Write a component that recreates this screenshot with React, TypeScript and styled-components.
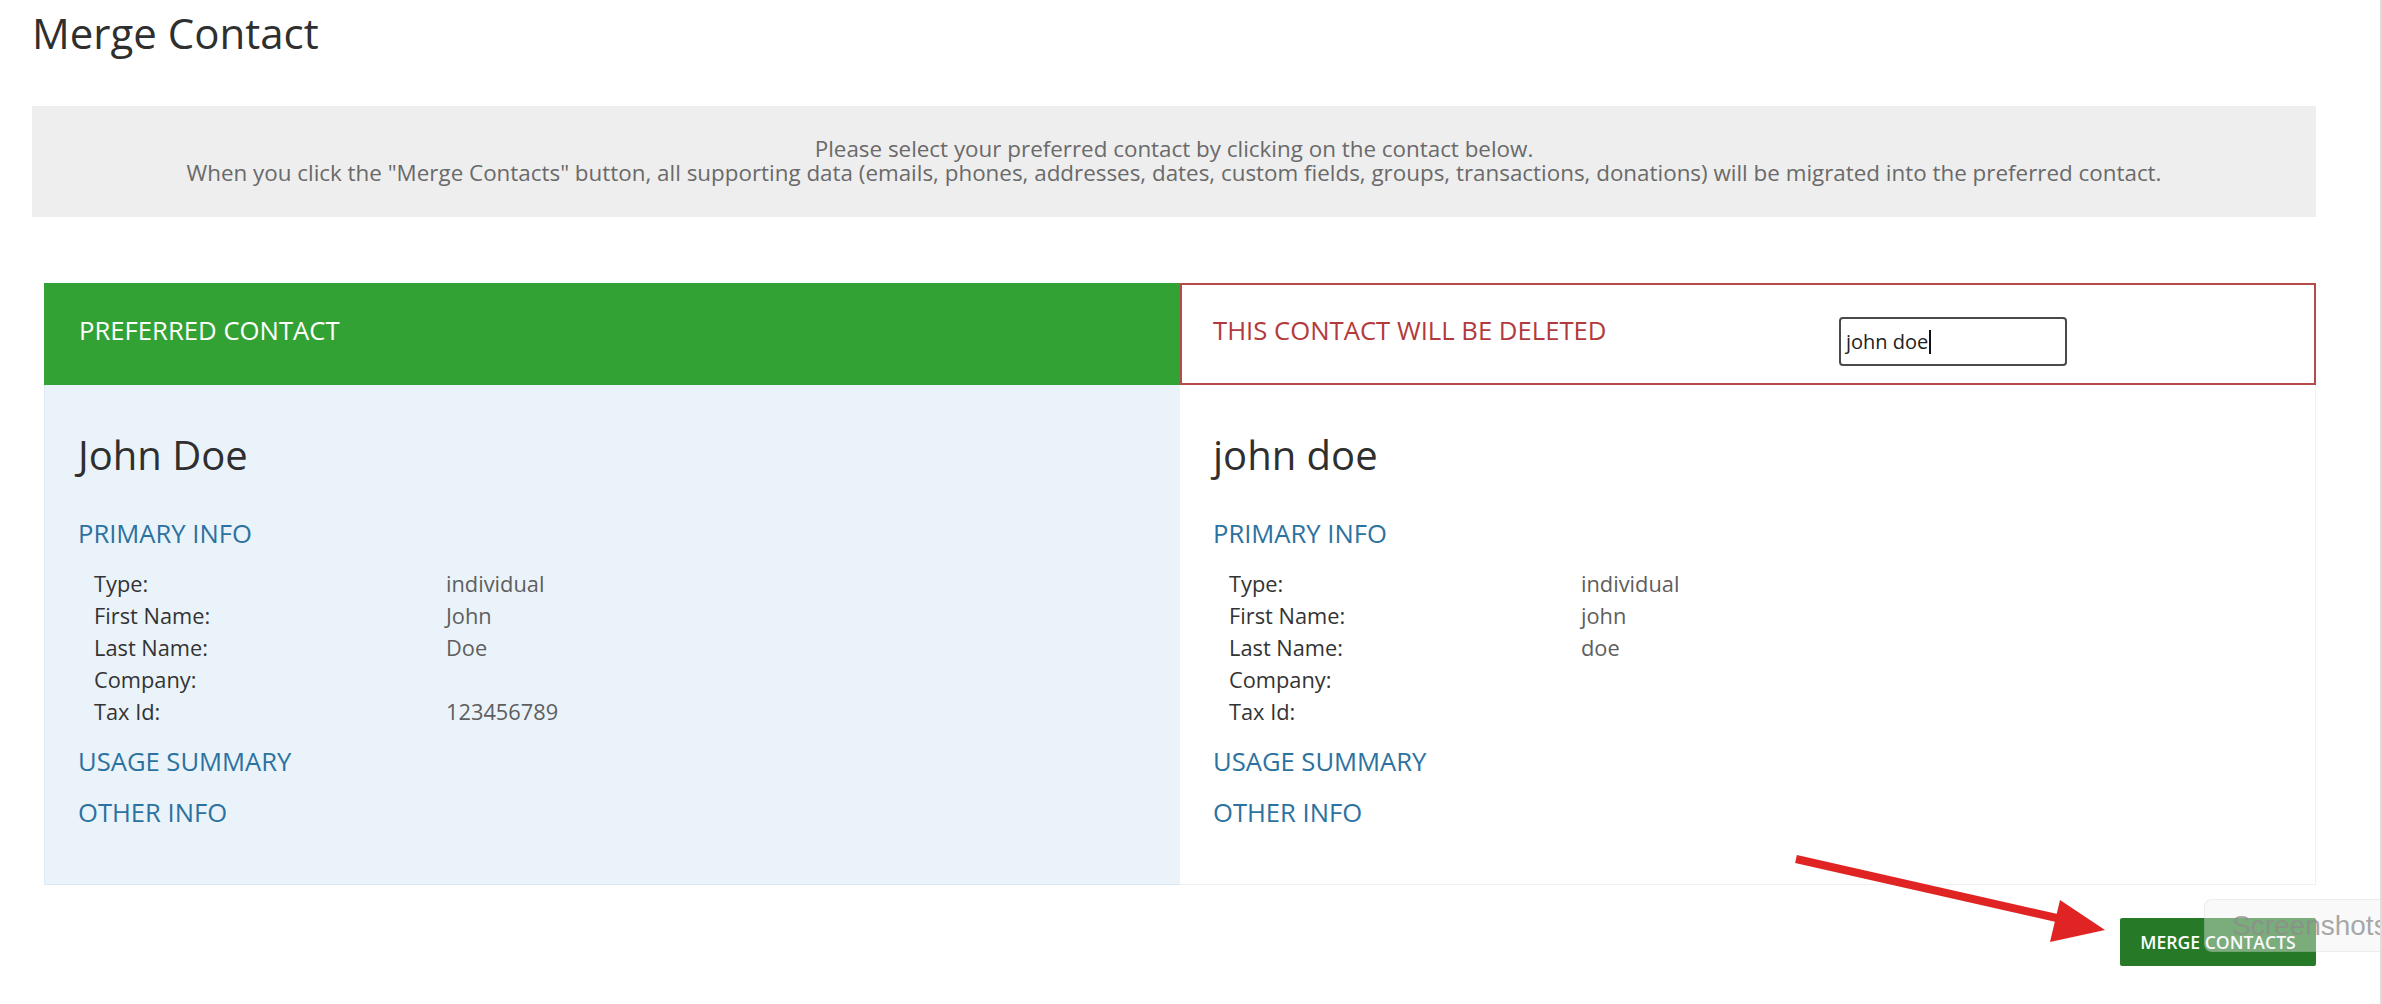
import styled, { createGlobalStyle } from "styled-components";

const GlobalStyle = createGlobalStyle`
  html, body {
    margin: 0;
    padding: 0;
    background: #ffffff;
  }
  body {
    font-family: "Open Sans", "Liberation Sans", sans-serif;
    color: #333333;
  }
  * {
    box-sizing: border-box;
  }
`;

const Frame = styled.div`
  position: relative;
  min-height: 100vh;
  overflow: hidden;
  border-right: 2px solid #dcdcdc;
`;

const Page = styled.div`
  padding: 8px 64px 0 31px;
  display: flex;
  flex-direction: column;
`;

const Title = styled.h1`
  margin: 0 0 0 1px;
  font-size: 42px;
  line-height: 50px;
  font-weight: 400;
  color: #2f2f2f;
`;

const Notice = styled.div`
  margin: 48px 0 0 1px;
  background: #eeeeee;
  padding: 31px 0 33px;
  text-align: center;
  font-size: 22.4px;
  line-height: 23.5px;
  color: #6a6a6a;
`;

const Compare = styled.div`
  margin: 66px 0 0 13px;
  display: grid;
  grid-template-columns: 1fr 1fr;
`;

const Header = styled.div<{ $tone: "keep" | "drop" }>`
  height: 102px;
  display: flex;
  align-items: center;
  font-size: 25.7px;
  line-height: 30px;
  padding: ${(p) => (p.$tone === "keep" ? "0 0 7px 35px" : "0 0 0 31px")};
  background: ${(p) => (p.$tone === "keep" ? "#33a234" : "#ffffff")};
  color: ${(p) => (p.$tone === "keep" ? "#ffffff" : "#b23a3c")};
  border: ${(p) => (p.$tone === "keep" ? "none" : "2px solid #b44a4a")};
`;

const HeaderLabel = styled.span`
  width: 626px;
  margin-bottom: 7px;
`;

const SearchBox = styled.div`
  width: 228px;
  height: 49px;
  margin-top: 15px;
  border: 2px solid #4a4a4a;
  border-radius: 4px;
  padding: 0 5px;
  display: flex;
  align-items: center;
  font-size: 20px;
  color: #222;
  background: #fff;
`;

const Caret = styled.span`
  width: 1.5px;
  height: 24px;
  background: #111;
  margin-left: 1px;
`;

const Panel = styled.div<{ $preferred: boolean }>`
  height: 500px;
  padding: 48px 0 0 33px;
  background: ${(p) => (p.$preferred ? "#ebf3fa" : "#ffffff")};
  border-bottom: 1px solid ${(p) => (p.$preferred ? "#dbe6f1" : "#edf1f6")};
  border-left: ${(p) => (p.$preferred ? "1px solid #e0eaf4" : "none")};
  border-right: ${(p) => (p.$preferred ? "none" : "1px solid #edf1f6")};
`;

const Name = styled.div`
  font-size: 40px;
  line-height: 44px;
  color: #2f2f2f;
  margin-bottom: 42px;
`;

const SectionTitle = styled.div`
  font-size: 25.6px;
  line-height: 30px;
  color: #2c72a0;
  & + & {
    margin-top: 21px;
  }
`;

const Fields = styled.div`
  display: grid;
  grid-template-columns: 352px 1fr;
  padding-left: 16px;
  margin: 19px 0 19px;
  font-size: 21.8px;
  line-height: 32px;
`;

const Label = styled.span`
  color: #333333;
`;

const Value = styled.span`
  color: #5e5e5e;
`;

const Actions = styled.div`
  display: flex;
  justify-content: flex-end;
  margin-top: 33px;
`;

const MergeButton = styled.button`
  height: 48px;
  width: 196px;
  padding: 0;
  border: none;
  border-radius: 2px;
  background: #267a27;
  color: #ffffff;
  font-family: "Open Sans", sans-serif;
  font-size: 17.6px;
  font-weight: 600;
  cursor: pointer;
`;

const Arrow = styled.svg`
  position: absolute;
  left: 1780px;
  top: 840px;
  pointer-events: none;
`;

const ToastHint = styled.div`
  position: absolute;
  left: 2204px;
  top: 899px;
  width: 200px;
  height: 53px;
  padding-left: 27px;
  display: flex;
  align-items: center;
  border-radius: 8px;
  border: 1px solid rgba(0, 0, 0, 0.05);
  background: rgba(240, 240, 240, 0.42);
  font-family: "Liberation Sans", Arial, sans-serif;
  font-size: 28px;
  color: rgba(140, 140, 140, 0.75);
  white-space: nowrap;
`;

type Contact = {
  name: string;
  type: string;
  first: string;
  last: string;
  company: string;
  taxId: string;
};

const preferred: Contact = {
  name: "John Doe",
  type: "individual",
  first: "John",
  last: "Doe",
  company: "",
  taxId: "123456789",
};

const duplicate: Contact = {
  name: "john doe",
  type: "individual",
  first: "john",
  last: "doe",
  company: "",
  taxId: "",
};

const ContactPanel = ({ contact, preferred }: { contact: Contact; preferred: boolean }) => (
  <Panel $preferred={preferred}>
    <Name>{contact.name}</Name>
    <SectionTitle>PRIMARY INFO</SectionTitle>
    <Fields>
      <Label>Type:</Label>
      <Value>{contact.type}</Value>
      <Label>First Name:</Label>
      <Value>{contact.first}</Value>
      <Label>Last Name:</Label>
      <Value>{contact.last}</Value>
      <Label>Company:</Label>
      <Value>{contact.company}</Value>
      <Label>Tax Id:</Label>
      <Value>{contact.taxId}</Value>
    </Fields>
    <SectionTitle>USAGE SUMMARY</SectionTitle>
    <SectionTitle>OTHER INFO</SectionTitle>
  </Panel>
);

export default function App() {
  return (
    <Frame>
      <GlobalStyle />
      <Page>
        <Title>Merge Contact</Title>
        <Notice>
          Please select your preferred contact by clicking on the contact below.
          <br />
          When you click the "Merge Contacts" button, all supporting data (emails, phones,
          addresses, dates, custom fields, groups, transactions, donations) will be migrated
          into the preferred contact.
        </Notice>
        <Compare>
          <Header $tone="keep">PREFERRED CONTACT</Header>
          <Header $tone="drop">
            <HeaderLabel>THIS CONTACT WILL BE DELETED</HeaderLabel>
            <SearchBox>
              john doe
              <Caret />
            </SearchBox>
          </Header>
          <ContactPanel contact={preferred} preferred />
          <ContactPanel contact={duplicate} preferred={false} />
        </Compare>
        <Actions>
          <MergeButton>MERGE CONTACTS</MergeButton>
        </Actions>
      </Page>
      <Arrow width="340" height="110" viewBox="0 0 340 110">
        <line x1="16" y1="19" x2="290" y2="81" stroke="#e02424" strokeWidth="8" />
        <polygon points="325,90 280,60 270,102" fill="#e02424" />
      </Arrow>
      <ToastHint>Screenshots</ToastHint>
    </Frame>
  );
}
